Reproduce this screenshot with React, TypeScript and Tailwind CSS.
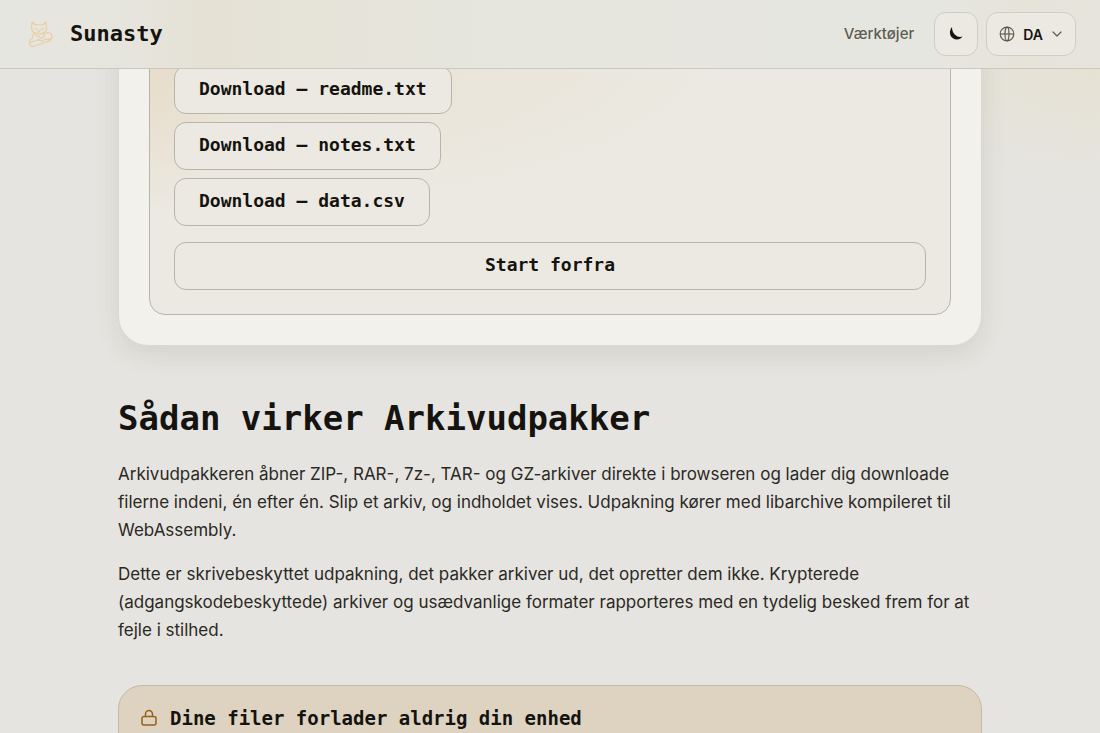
import React from "react";

const mono = "font-['DejaVu_Sans_Mono',monospace]";
const files = ["readme.txt", "notes.txt", "data.csv"];

function CatLogo() {
  return (
    <svg viewBox="0 0 28 28" className="size-7" fill="none" stroke="#e9cda3" strokeWidth="1.2" strokeLinecap="round" strokeLinejoin="round" aria-hidden="true">
      <path d="M6 2 L9.500 5 Q13 4 16.500 5 L20 2 L20.500 9 Q19.500 13.500 13 14 Q6.500 13.500 5.500 9 Z" />
      <path d="M8.500 8.500 L11 9.500 M17.500 8.500 L15 9.500 M12 11 L13 12 L14 11" />
      <path d="M7.500 13.500 Q6.500 16 6.500 18 Q3 20 3.500 24 Q5 28 9 26 L20 22 Q25 21 26 17.500 Q26.500 13 22 12.500 Q19 12.500 18 15" />
      <path d="M18 13 Q19 16.500 16 18 L10 20.500 Q6 21 5 23 M9 15 L14 17 M12 20 L16 21 L20 19 Q24 20 25.500 18" />
    </svg>
  );
}

export default function App() {
  return (
    <div className="min-h-screen overflow-hidden bg-[#e5e4e0] bg-[radial-gradient(ellipse_240px_140px_at_100%_50px,#e6e1d1,transparent)] bg-no-repeat font-['Inter',sans-serif] text-[#15130f]">
      <header className="sticky top-0 z-10 flex items-center justify-between border-b border-[#c9c8c2] bg-[linear-gradient(90deg,#e6e6e0_0%,#e6e5de_10%,#e5e1d5_19%,#e6e4da_32%,#e6e6df_50%,#e6e6e0_85%,#e6e3d9_93%,#e6e4dc_100%)] px-6 py-3">
        <a href="#" className={`flex items-center gap-[14px] pb-px text-[22px] font-bold ${mono}`}>
          <span className="flex size-8 items-center justify-center"><CatLogo /></span>
          Sunasty
        </a>
        <nav className="flex items-center gap-2">
          <a href="#tools" className="mr-3 text-[15px] font-medium text-[#5f5c52]">Værktøjer</a>
          <button aria-label="Mørkt tema" className="flex size-11 items-center justify-center rounded-xl border border-[#cfcdc6] bg-[#ece9e2]">
            <svg viewBox="0 0 16 16" className="size-4" fill="#15130f" aria-hidden="true">
              <path d="M4 1 C.8 5 1.500 10 5 12.300 C8.300 14.500 12.500 13.500 14.500 10.500 C11.500 11.500 8.500 10.500 6.500 8.300 C4.500 6 4 3.500 4 1 Z" />
            </svg>
          </button>
          <button aria-label="Sprog: DA" className="flex h-11 items-center gap-2 rounded-xl border border-[#cfcdc6] bg-[#ece9e2] px-3 text-[14px] font-semibold">
            <svg viewBox="0 0 16 16" className="size-4" fill="none" stroke="#5f5c52" strokeWidth="1.200" aria-hidden="true">
              <circle cx="8" cy="8" r="6.800" />
              <ellipse cx="8" cy="8" rx="2" ry="6.800" />
              <path d="M1 8h14" />
            </svg>
            DA
            <svg viewBox="0 0 12 12" className="size-3" fill="none" stroke="#5f5c52" strokeWidth="1.200" strokeLinecap="round" strokeLinejoin="round" aria-hidden="true">
              <path d="M2 4 6 8 10 4" />
            </svg>
          </button>
        </nav>
      </header>

      <main className="mx-auto -mt-[29px] max-w-[912px] px-6">
        <section className="rounded-b-[30px] border border-[#dad9d2] bg-[#f2f1ec] px-[30px] pb-[30px] shadow-[0_8px_24px_rgba(80,80,50,0.12)]">
          <div className="rounded-b-2xl border border-[#b7b4ac] bg-[#ece9e2] bg-[radial-gradient(ellipse_80px_170px_at_0_0,#e9dccb,transparent),radial-gradient(ellipse_500px_170px_at_10%_0,#e6e1d0,transparent)] p-6">
            <ul className="flex flex-col items-start gap-2">
              {files.map((name) => (
                <li key={name}>
                  <button className={`block h-12 rounded-xl border border-[#b7b4ac] bg-[#ece9e2] px-6 pb-[3px] text-[18px] font-bold ${mono}`}>
                    Download — {name}
                  </button>
                </li>
              ))}
            </ul>
            <button className={`mt-4 block h-12 w-full rounded-xl border border-[#b7b4ac] pb-[3px] text-[18px] font-bold ${mono}`}>
              Start forfra
            </button>
          </div>
        </section>

        <section className="mt-[50px] text-[17px] leading-7 text-[#2b2924]">
          <h2 className={`mb-5 text-[34px] leading-[44px] font-bold text-[#15130f] ${mono}`}>Sådan virker Arkivudpakker</h2>
          <p className="mb-4">
            Arkivudpakkeren åbner ZIP-, RAR-, 7z-, TAR- og GZ-arkiver direkte i browseren og lader dig downloade filerne indeni, én efter én. Slip et arkiv, og indholdet vises. Udpakning kører med libarchive kompileret til WebAssembly.
          </p>
          <p>
            Dette er skrivebeskyttet udpakning, det pakker arkiver ud, det opretter dem ikke. Krypterede (adgangskodebeskyttede) arkiver og usædvanlige formater rapporteres med en tydelig besked frem for at fejle i stilhed.
          </p>
        </section>

        <section className="-mb-6 mt-[41px] rounded-[24px] border border-[#c4b9a6] bg-[#ded3c0] px-[21px] pt-[18px] pb-10">
          <h2 className={`flex items-center gap-3 text-[19px] leading-7 font-bold ${mono}`}>
            <svg viewBox="0 0 18 18" className="size-[18px]" fill="none" stroke="#9a5f1c" strokeWidth="1.500" strokeLinecap="round" strokeLinejoin="round" aria-hidden="true">
              <path d="M4 7.500h10a2 2 0 0 1 2 2v4.500a2 2 0 0 1-2 2H4a2 2 0 0 1-2-2V9.500a2 2 0 0 1 2-2Z" />
              <path d="M5.500 7.500V5a3.500 3.500 0 0 1 7 0V7.500" />
            </svg>
            Dine filer forlader aldrig din enhed
          </h2>
        </section>
      </main>
    </div>
  );
}
